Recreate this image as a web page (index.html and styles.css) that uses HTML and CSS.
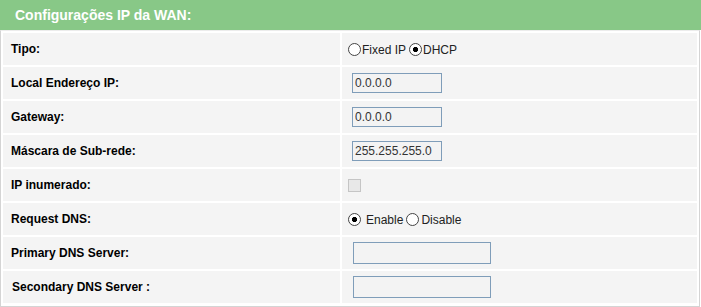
FILE: index.html
```html
<!DOCTYPE html>
<html>
<head>
<meta charset="utf-8">
<link rel="stylesheet" href="styles.css">
</head>
<body>
<div class="header">Configurações IP da WAN:</div>
<div class="panel">
  <table class="form">
    <tr>
      <td class="label">Tipo:</td>
      <td class="value"><input type="radio" class="radio r-tight" name="t"><span class="opt">Fixed IP</span><input type="radio" class="radio r-tight r-gap" name="t" checked><span class="opt">DHCP</span></td>
    </tr>
    <tr>
      <td class="label">Local Endereço IP:</td>
      <td class="value"><input type="text" class="field short" value="0.0.0.0" disabled></td>
    </tr>
    <tr>
      <td class="label">Gateway:</td>
      <td class="value"><input type="text" class="field short" value="0.0.0.0" disabled></td>
    </tr>
    <tr>
      <td class="label">Máscara de Sub-rede:</td>
      <td class="value"><input type="text" class="field short" value="255.255.255.0" disabled></td>
    </tr>
    <tr>
      <td class="label">IP inumerado:</td>
      <td class="value"><input type="checkbox" class="check" disabled></td>
    </tr>
    <tr>
      <td class="label">Request DNS:</td>
      <td class="value"><input type="radio" class="radio r-wide" name="d" checked><span class="opt">Enable</span><input type="radio" class="radio r-mid" name="d"><span class="opt">Disable</span></td>
    </tr>
    <tr>
      <td class="label">Primary DNS Server:</td>
      <td class="value"><input type="text" class="field long" value=""></td>
    </tr>
    <tr>
      <td class="label label-last">Secondary DNS Server :</td>
      <td class="value"><input type="text" class="field long" value=""></td>
    </tr>
  </table>
</div>
</body>
</html>
```

FILE: styles.css
```css
html, body {
  margin: 0;
  padding: 0;
  background: #ffffff;
  font-family: "Liberation Sans", Arial, sans-serif;
}

.header {
  width: 701px;
  height: 30px;
  box-sizing: border-box;
  background: #88c887;
  color: #ffffff;
  font-size: 14px;
  font-weight: bold;
  line-height: 30px;
  padding-left: 15px;
}

.panel {
  width: 700px;
  box-sizing: border-box;
  border: 1px solid #d4d4d4;
  border-top-color: #ececec;
  padding-bottom: 1px;
}

.form {
  width: 698px;
  border-collapse: separate;
  border-spacing: 2px;
  table-layout: fixed;
}

.form td {
  height: 32px;
  padding: 0;
  background: #f4f4f4;
  vertical-align: middle;
  font-size: 12px;
}

.form td.label {
  width: 337px;
  padding-left: 8px;
  box-sizing: border-box;
  font-weight: bold;
  color: #000000;
}

.form td.label-last {
  padding-left: 9px;
}

.form td.value {
  width: 355px;
  padding-left: 6px;
  box-sizing: border-box;
  color: #222222;
  white-space: nowrap;
}

.opt {
  vertical-align: middle;
}

.radio {
  appearance: none;
  -webkit-appearance: none;
  width: 13px;
  height: 13px;
  box-sizing: border-box;
  border: 1px solid #444444;
  border-radius: 50%;
  background: #ffffff;
  margin: 0;
  vertical-align: middle;
}

.radio:checked {
  background: radial-gradient(circle, #000000 0, #000000 2.3px, #ffffff 2.9px);
}

.r-tight {
  margin-right: 1px;
}

.r-gap {
  margin-left: 3px;
}

.r-wide {
  margin-right: 5px;
}

.r-mid {
  margin-left: 3px;
  margin-right: 2px;
}

.check {
  appearance: none;
  -webkit-appearance: none;
  width: 13px;
  height: 13px;
  box-sizing: border-box;
  border: 1px solid #c5c5c5;
  background: #e8e8e8;
  margin: 0;
  vertical-align: middle;
}

.field {
  box-sizing: border-box;
  border: 1px solid #7f9db9;
  background: #f3f3f3;
  color: #333333;
  font-family: "Liberation Sans", Arial, sans-serif;
  font-size: 12px;
  padding: 0 2px;
  margin: 0 0 0 5px;
  vertical-align: middle;
  outline: none;
}

.field:disabled {
  color: #333333;
  background: #f3f3f3;
  -webkit-text-fill-color: #333333;
  opacity: 1;
}

.short {
  width: 90px;
  height: 20px;
  margin-left: 4px;
}

.long {
  width: 138px;
  height: 22px;
}
```
